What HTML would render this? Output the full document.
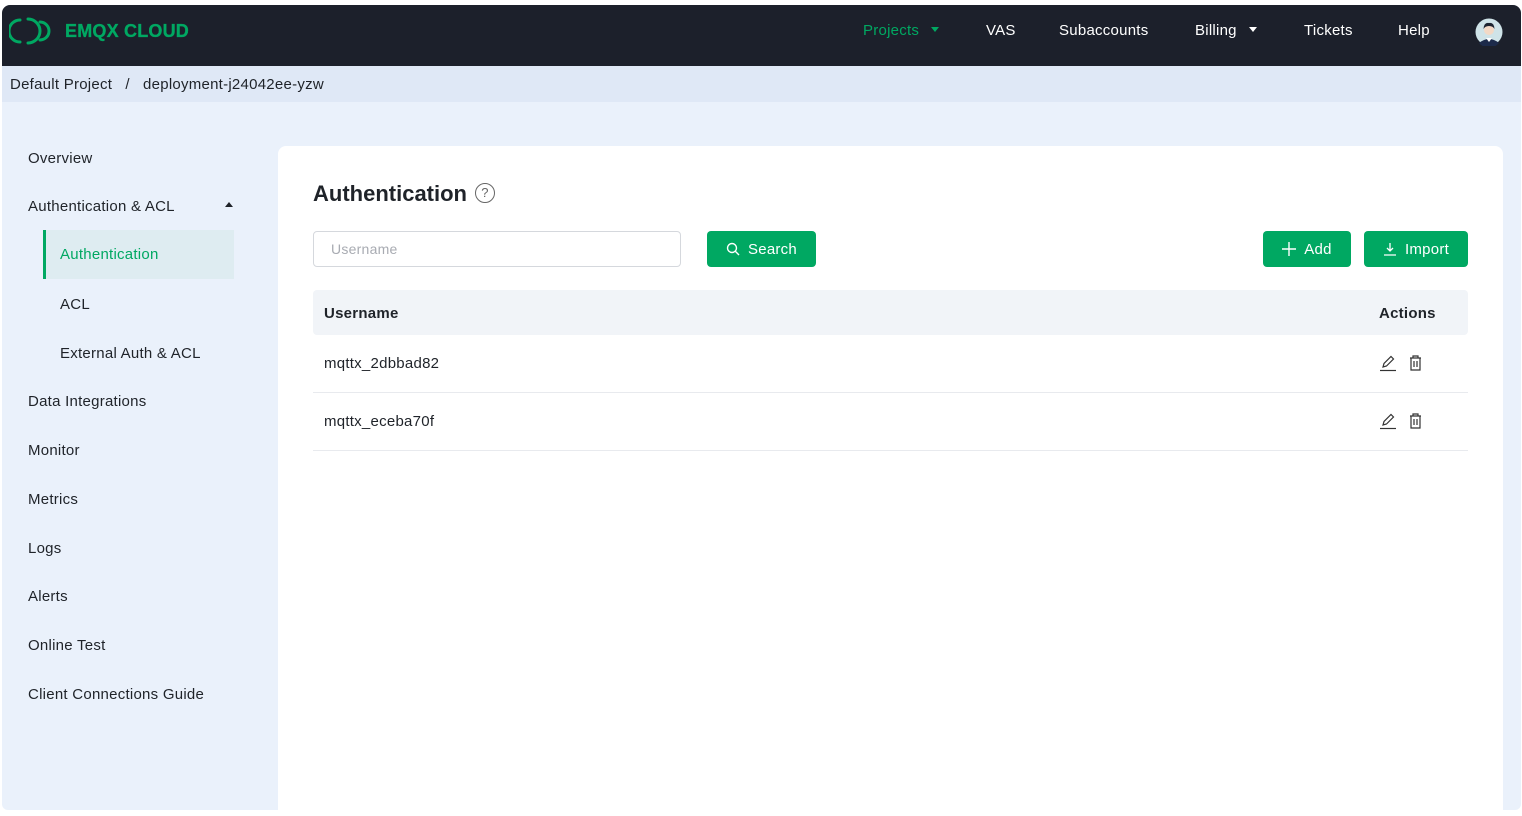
<!DOCTYPE html>
<html><head><meta charset="utf-8"><style>
*{box-sizing:border-box;margin:0;padding:0}
body{width:1522px;height:816px;background:#fff;font-family:"Liberation Sans",Arial,sans-serif;position:relative;overflow:hidden;color:#1f2329;letter-spacing:0.25px}
.frame{position:absolute;left:2px;top:5px;width:1519px;height:805px;background:#eaf1fb;border-radius:8px 8px 6px 6px;overflow:hidden}
.hdr{position:absolute;left:0;top:0;width:100%;height:61px;background:#1c202b}
.logo{position:absolute;left:7px;top:10px}
.brand{position:absolute;left:63px;top:16px;color:#00a862;font-size:18px;letter-spacing:0.2px;font-weight:600;-webkit-text-stroke:0.3px #00a862}
.nav{position:absolute;top:17px;font-size:15px;color:#fff}
.caret{display:inline-block;width:0;height:0;border-left:4px solid transparent;border-right:4px solid transparent;border-top:5px solid #fff;margin-left:12px;vertical-align:3px}
.bc{position:absolute;left:0;top:61px;width:100%;height:36px;background:#dfe8f6;font-size:15px;padding:10px 0 0 8px;color:#1f2329}
.side{position:absolute;left:26px;font-size:15px;color:#1f2329;margin-top:1px}
.active{position:absolute;left:41px;top:225px;width:191px;height:49px;background:#deecf1;border-left:3px solid #00a862;color:#00a862;font-size:15px;padding:16px 0 0 14px}
.card{position:absolute;left:276px;top:141px;width:1225px;height:680px;background:#fff;border-radius:8px}
h1{position:absolute;left:35px;top:35px;font-size:22px;font-weight:bold;color:#1f2329;letter-spacing:0}
.help{position:absolute;left:197px;top:37px;width:20px;height:20px;border:1.3px solid #666;border-radius:50%;font-size:13px;color:#666;text-align:center;line-height:18px}
.inp{position:absolute;left:35px;top:85px;width:368px;height:36px;border:1px solid #d5d8dd;border-radius:4px;font-size:14px;color:#a8abb2;padding:9px 0 0 17px}
.btn{position:absolute;top:85px;height:36px;background:#00a862;border-radius:4px;color:#fff;font-size:15px;display:flex;align-items:center;justify-content:center;gap:8px}
.th{position:absolute;left:35px;top:144px;width:1155px;height:45px;background:#f1f4f8;border-radius:4px;font-weight:bold;font-size:15px}
.row{position:absolute;left:35px;width:1155px;height:58px;border-bottom:1px solid #e8eaee;font-size:15px}
</style></head><body>
<div class="frame">
 <div class="hdr">
  <svg class="logo" width="46" height="32" viewBox="0 0 46 32"><g fill="none" stroke="#00a862" stroke-width="3" stroke-linecap="round"><path d="M11 5 A11 11 0 0 0 11 27"/><path d="M19 4 A12 12 0 0 1 19 28"/><path d="M31 7 A9 9 0 0 1 31 25"/></g></svg>
  <div class="brand">EMQX CLOUD</div>
  <div class="nav" style="left:861px;color:#00a862">Projects<span class="caret" style="border-top-color:#00a862"></span></div>
  <div class="nav" style="left:984px">VAS</div>
  <div class="nav" style="left:1057px">Subaccounts</div>
  <div class="nav" style="left:1193px">Billing<span class="caret"></span></div>
  <div class="nav" style="left:1302px">Tickets</div>
  <div class="nav" style="left:1396px">Help</div>
  <svg style="position:absolute;left:1473px;top:13px" width="28" height="28" viewBox="0 0 28 28"><circle cx="14" cy="14" r="13.5" fill="#cfe3e8"/><path d="M4 25 Q14 17 24 25 A13 13 0 0 1 4 25Z" fill="#1c2a4a"/><path d="M11 20 L14 24 L17 20Z" fill="#fff"/><circle cx="14" cy="12" r="5" fill="#f3d9c6"/><path d="M8.5 11 Q9 4 14 5 Q19 4 19.5 11 Q18 8 14 8 Q10 8 8.5 11Z" fill="#1c2330"/></svg>
 </div>
 <div class="bc">Default Project &nbsp;&nbsp;/&nbsp;&nbsp; deployment-j24042ee-yzw</div>
 <div class="side" style="top:144px">Overview</div>
 <div class="side" style="top:192px">Authentication &amp; ACL</div>
 <div style="position:absolute;left:223px;top:197px;border-left:4px solid transparent;border-right:4px solid transparent;border-bottom:5px solid #1f2329"></div>
 <div class="active">Authentication</div>
 <div class="side" style="left:58px;top:290px">ACL</div>
 <div class="side" style="left:58px;top:339px">External Auth &amp; ACL</div>
 <div class="side" style="top:387px">Data Integrations</div>
 <div class="side" style="top:436px">Monitor</div>
 <div class="side" style="top:485px">Metrics</div>
 <div class="side" style="top:534px">Logs</div>
 <div class="side" style="top:582px">Alerts</div>
 <div class="side" style="top:631px">Online Test</div>
 <div class="side" style="top:680px">Client Connections Guide</div>
 <div class="card">
  <h1>Authentication</h1><div class="help">?</div>
  <div class="inp">Username</div>
  <div class="btn" style="left:429px;width:109px"><svg width="14" height="14" viewBox="0 0 14 14" fill="none" stroke="#fff" stroke-width="1.4"><circle cx="6" cy="6" r="4.5"/><path d="M9.3 9.3L13 13"/></svg>Search</div>
  <div class="btn" style="left:985px;width:88px"><svg width="14" height="14" viewBox="0 0 14 14" stroke="#fff" stroke-width="1.4"><path d="M7 0V14M0 7H14"/></svg>Add</div>
  <div class="btn" style="left:1086px;width:104px"><svg width="14" height="14" viewBox="0 0 14 14" fill="none" stroke="#fff" stroke-width="1.3"><path d="M7 1V9M4 6L7 9L10 6M1 13H13"/></svg>Import</div>
  <div class="th"><span style="position:absolute;left:11px;top:15px">Username</span><span style="position:absolute;left:1066px;top:15px">Actions</span></div>
  <div class="row" style="top:189px"><span style="position:absolute;left:11px;top:20px">mqttx_2dbbad82</span>
   <svg style="position:absolute;left:1067px;top:19px" width="48" height="18" viewBox="0 0 48 18" fill="none" stroke="#333" stroke-width="1.2"><path d="M3 13L4 9.5L11 2.5L13.5 5L6.5 12Z"/><path d="M0 16.5H16"/><path d="M30 4H41M33 4V2H38V4M31 4V16H40V4M34 7V13M37 7V13"/></svg></div>
  <div class="row" style="top:247px"><span style="position:absolute;left:11px;top:20px">mqttx_eceba70f</span>
   <svg style="position:absolute;left:1067px;top:19px" width="48" height="18" viewBox="0 0 48 18" fill="none" stroke="#333" stroke-width="1.2"><path d="M3 13L4 9.5L11 2.5L13.5 5L6.5 12Z"/><path d="M0 16.5H16"/><path d="M30 4H41M33 4V2H38V4M31 4V16H40V4M34 7V13M37 7V13"/></svg></div>
 </div>
</div>
</body></html>
